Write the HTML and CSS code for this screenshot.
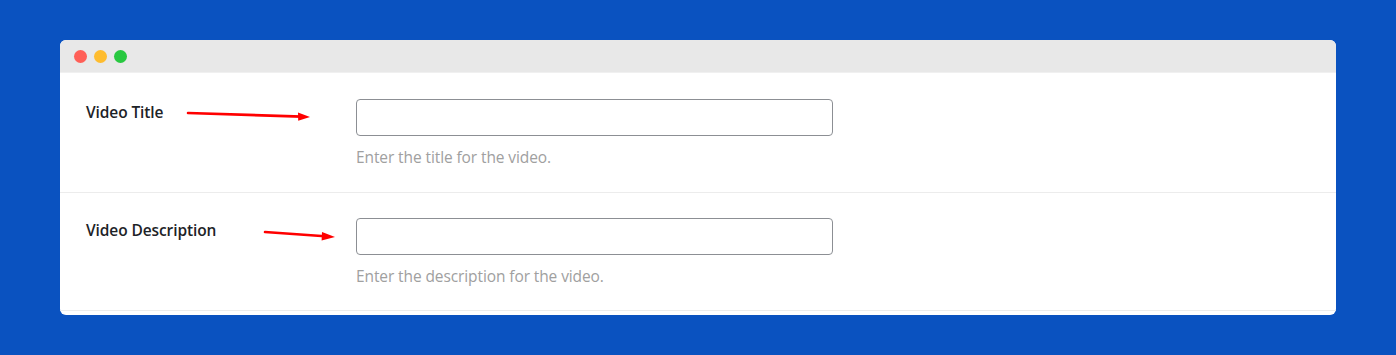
FILE: index.html
```html
<!DOCTYPE html>
<html lang="en">
<head>
    <meta charset="UTF-8">
    <meta name="viewport" content="width=device-width, initial-scale=1.0">
    <link rel="stylesheet" href="styles.css">
</head>
<body>
<div class="window">
    <div class="titlebar">
        <span class="dot red"></span>
        <span class="dot yellow"></span>
        <span class="dot green"></span>
    </div>
    <div class="form">
        <div class="row">
            <label class="label" for="videoTitle">Video Title</label>
            <div class="field">
                <input type="text" id="videoTitle" class="input">
                <p class="hint">Enter the title for the video.</p>
            </div>
        </div>
        <div class="row">
            <label class="label" for="videoDescription">Video Description</label>
            <div class="field">
                <input type="text" id="videoDescription" class="input">
                <p class="hint">Enter the description for the video.</p>
            </div>
        </div>
    </div>
    <!-- annotation arrows drawn over the form -->
    <svg class="arrows" width="1276" height="275" viewBox="0 0 1276 275">
        <line x1="128" y1="73" x2="242" y2="76.6" stroke="#f00" stroke-width="2.6" stroke-linecap="round"/>
        <polygon points="250,77 238,72.6 238.2,80.8" fill="#f00"/>
        <line x1="205" y1="192" x2="265" y2="196.3" stroke="#f00" stroke-width="2.6" stroke-linecap="round"/>
        <polygon points="275,197 262,192.1 261.6,200.4" fill="#f00"/>
    </svg>
</div>
</body>
</html>
```

FILE: styles.css
```css
html, body {
    margin: 0;
    padding: 0;
}
body {
    background-color: #0a52c0;
    padding: 40px 60px;
    font-family: 'Open Sans', 'Noto Sans', sans-serif;
}
.window {
    position: relative;
    width: 1276px;
    height: 275px;
    background: #fff;
    border-radius: 6px;
    overflow: hidden;
}
.titlebar {
    height: 32px;
    background: #e8e8e8;
    border-bottom: 1px solid #f0f0f0;
    display: flex;
    align-items: center;
    gap: 7px;
    padding-left: 14px;
}
.dot {
    width: 13px;
    height: 13px;
    border-radius: 50%;
}
.dot.red {
    background: #ff5f57;
}
.dot.yellow {
    background: #febc2e;
}
.dot.green {
    background: #28c840;
}
.row {
    display: flex;
    border-bottom: 1px solid #ececec;
    height: 120px;
    box-sizing: border-box;
}
.row + .row {
    height: 118px;
}
.label {
    width: 270px;
    padding-left: 26px;
    padding-top: 28px;
    font-size: 15.5px;
    line-height: 22px;
    font-weight: 600;
    color: #1d2327;
    letter-spacing: -0.1px;
}
.row + .row .label {
    padding-top: 26px;
}
.field {
    padding-top: 26px;
}
.row + .row .field {
    padding-top: 25px;
}
.input {
    display: block;
    width: 477px;
    height: 37px;
    box-sizing: border-box;
    border: 1px solid #8c8f94;
    border-radius: 4px;
    margin: 0;
    padding: 0 8px;
    background: #fff;
}
.hint {
    margin: 10px 0 0;
    font-size: 15.5px;
    line-height: 22px;
    color: #a0a0a0;
    letter-spacing: -0.1px;
}
.arrows {
    position: absolute;
    top: 0;
    left: 0;
    pointer-events: none;
}
```
